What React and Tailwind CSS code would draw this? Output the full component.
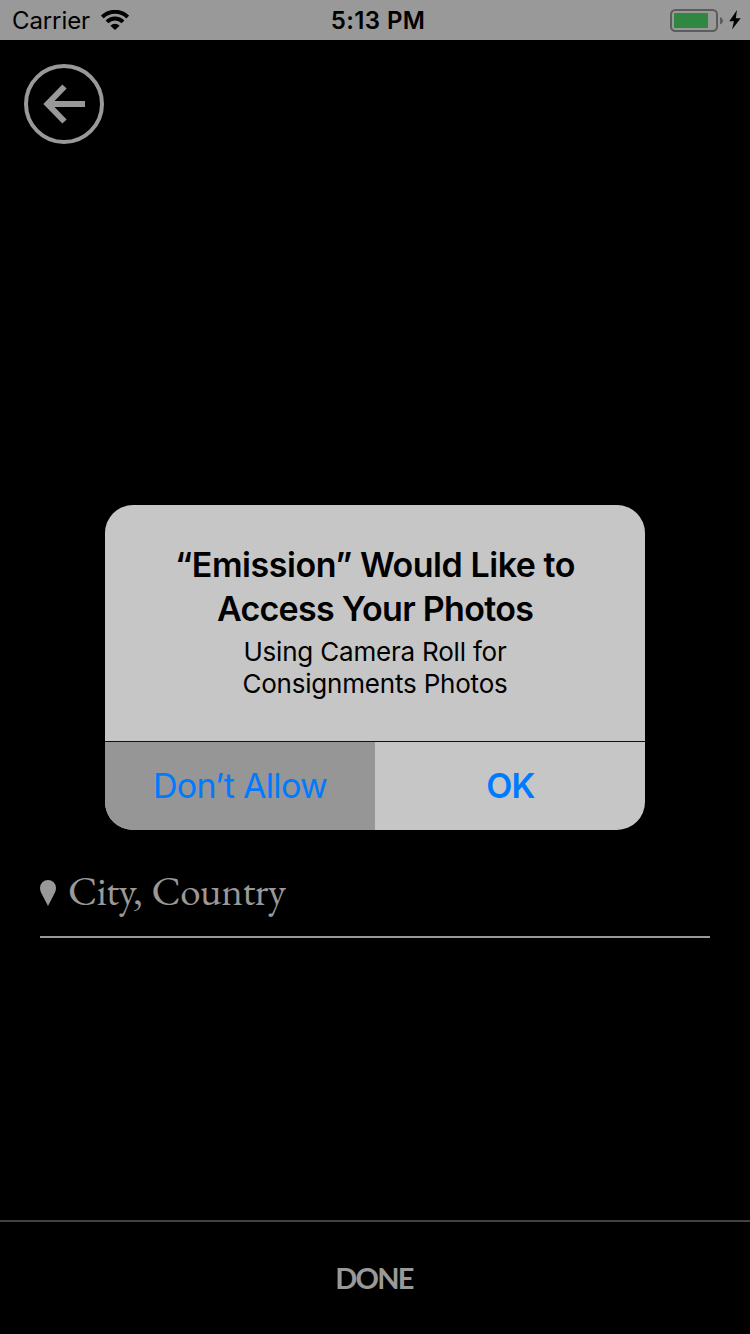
import React from "react";

function StatusBar() {
  return (
    <header className="grid h-10 grid-cols-3 items-start bg-[#999999] font-['Inter',sans-serif] text-2xl leading-[41px] text-black">
      <div className="flex items-start gap-[11px] pl-3">
        <span className="tracking-[-0.1px]">Carrier</span>
        <svg className="mt-2.5" width="28" height="20" viewBox="0 0 28 20" fill="none" stroke="#000">
          <path d="M1.300 7a18.100 18.100 0 0 1 25.400 0" strokeWidth="4" />
          <path d="M6 11.900a11.300 11.300 0 0 1 16 0" strokeWidth="4" />
          <path d="M9.400 15.700a6.400 6.400 0 0 1 9.200 0L14 20Z" fill="#000" stroke="none" />
        </svg>
      </div>
      <time className="pl-1.5 text-center font-semibold tracking-[0.4px]">5:13 PM</time>
      <div className="flex items-start justify-end gap-[5px] pt-[9px] pr-[9px]">
        <svg width="54" height="24" viewBox="0 0 54 24">
          <rect x="1" y="1" width="46" height="21" rx="4.5" fill="none" stroke="#5c5c5c" strokeWidth="2" />
          <rect x="4" y="4" width="34" height="15" rx="1" fill="#2f8741" />
          <path d="M50 8c4 1.500 4 6 0 7.500Z" fill="#5c5c5c" />
        </svg>
        <svg className="mt-px" width="12" height="20" viewBox="0 0 12 20">
          <path d="M8 0 .300 11.200H5L3 19.500 11.700 8.200H6.800Z" fill="#000" />
        </svg>
      </div>
    </header>
  );
}

function PermissionDialog() {
  return (
    <section
      role="alertdialog"
      className="absolute top-[505px] left-[105px] flex h-[325px] w-[540px] flex-col overflow-hidden rounded-[28px] bg-[#c6c6c6] text-center font-['Inter',sans-serif] text-black"
    >
      <div className="flex-1 pt-[37.5px]">
        <h1 className="text-[34px] leading-11 font-semibold tracking-[-0.45px]">
          “Emission” Would Like to
          <br />
          <span className="tracking-[-0.7px]">Access Your Photos</span>
        </h1>
        <p className="pt-[5px] text-[26px] leading-8 tracking-[-0.2px]">
          Using Camera Roll for
          <br />
          Consignments Photos
        </p>
      </div>
      <div className="grid h-[89px] grid-cols-2 border-t border-[#111] text-[34px] leading-[87px] tracking-[-0.7px] text-[#007aff]">
        <button className="bg-[#969696] pb-px">Don’t Allow</button>
        <button className="pb-px pl-px font-semibold">OK</button>
      </div>
    </section>
  );
}

export default function App() {
  return (
    <main className="relative flex h-[1334px] w-[750px] flex-col overflow-hidden bg-black text-[#999999]">
      <StatusBar />
      <nav className="p-6">
        <button aria-label="Back" className="block size-20">
          <svg width="80" height="80" viewBox="0 0 80 80" fill="none" stroke="#999999">
            <circle cx="40" cy="40" r="38" strokeWidth="4" />
            <path d="M61 40H24M40.500 22.500 23.500 40 40.500 57.500" strokeWidth="6" />
          </svg>
        </button>
      </nav>
      <div className="mx-10 mt-auto mb-[282px] flex h-[70px] items-start gap-3 border-b-2 border-[#999999]">
        <svg className="mt-3" width="16" height="26" viewBox="0 0 16 26">
          <path d="M8 0a8 8 0 0 1 8 8c0 3-1.500 5.500-2.800 8L8 26 2.800 16C1.500 13.500 0 11 0 8a8 8 0 0 1 8-8Z" fill="#999999" />
        </svg>
        <span className="font-['EB_Garamond','Liberation_Serif',serif] text-[41px] leading-[45px] tracking-[-0.45px] [word-spacing:1.5px]">
          City, Country
        </span>
      </div>
      <footer className="flex h-[114px] items-center justify-center border-t-2 border-[#424242] pr-[2px] pb-px font-['Lato',sans-serif] text-[29px] font-bold tracking-[-1.8px]">
        DONE
      </footer>
      <PermissionDialog />
    </main>
  );
}
